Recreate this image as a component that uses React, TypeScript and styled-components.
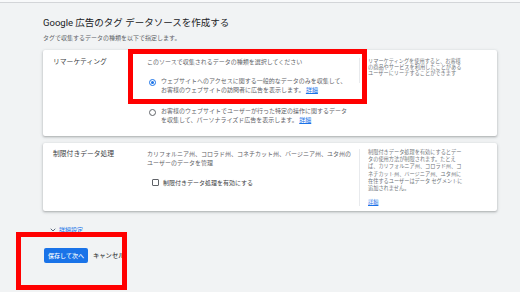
import React from 'react'
import styled, { createGlobalStyle } from 'styled-components'
import { ChevronDown } from 'lucide-react'

const GlobalStyle = createGlobalStyle`
  html, body {
    margin: 0;
    padding: 0;
    background: #f1f3f4;
    font-family: Roboto, "Noto Sans CJK JP", sans-serif;
  }
`

const App: React.FC = () => {
  return (
    <Page>
      <GlobalStyle />
      <TopRule />
      <Main>
        <Title>Google 広告のタグ データソースを作成する</Title>
        <Subtitle>タグで収集するデータの種類を以下で指定します。</Subtitle>

        <Card $first>
          <Label>リマーケティング</Label>
          <Middle>
            <Hint>このソースで収集されるデータの種類を選択してください</Hint>
            <RadioGroup>
              <RadioItem>
                <Radio $checked />
                <OptionText>
                  ウェブサイトへのアクセスに関する一般的なデータのみを収集して、
                  <br />
                  お客様のウェブサイトの訪問者に広告を表示します。 <Link>詳細</Link>
                </OptionText>
              </RadioItem>
              <RadioItem>
                <Radio />
                <OptionText>
                  お客様のウェブサイトでユーザーが行った特定の操作に関するデータ
                  <br />
                  を収集して、パーソナライズド広告を表示します。 <Link>詳細</Link>
                </OptionText>
              </RadioItem>
            </RadioGroup>
          </Middle>
          <Aside $lineHeight={6.3} $top={1} $bottom={7}>
            リマーケティングを使用すると、お客様
            <br />
            の商品やサービスを利用したことがある
            <br />
            ユーザーにリーチすることができます
          </Aside>
        </Card>

        <Card>
          <Label>制限付きデータ処理</Label>
          <Middle>
            <Hint>
              カリフォルニア州、コロラド州、コネチカット州、バージニア州、ユタ州の
              <br />
              ユーザーのデータを管理
            </Hint>
            <CheckRow>
              <CheckBox />
              <CheckLabel>制限付きデータ処理を有効にする</CheckLabel>
            </CheckRow>
          </Middle>
          <Aside $lineHeight={7.3} $top={0} $bottom={0}>
            制限付きデータ処理を有効にするとデー
            <br />
            タの使用方法が制限されます。たとえ
            <br />
            ば、カリフォルニア州、コロラド州、コ
            <br />
            ネチカット州、バージニア州、ユタ州に
            <br />
            在住するユーザーはデータ セグメントに
            <br />
            追加されません。
            <AsideLink>詳細</AsideLink>
          </Aside>
        </Card>

        <Advanced>
          <ChevronDown size={8} strokeWidth={2.5} />
          <span>詳細設定</span>
        </Advanced>

        <Actions>
          <PrimaryButton>保存して次へ</PrimaryButton>
          <TextButton>キャンセル</TextButton>
        </Actions>
      </Main>

      <Highlight $left={128} $top={49} $width={239} $height={55} />
      <Highlight $left={16} $top={232} $width={111} $height={58} />
    </Page>
  )
}

const Page = styled.div`
  position: relative;
  width: 520px;
  height: 292px;
  overflow: hidden;
`

const TopRule = styled.div`
  height: 2px;
  background: #f8f9fa;
  border-bottom: 1px solid #d3d5d8;
`

const Main = styled.div`
  display: flex;
  flex-direction: column;
  align-items: flex-start;
  padding-left: 43px;
`

const Title = styled.div`
  margin-top: 13.5px;
  font-size: 9.5px;
  line-height: 12px;
  color: #202124;
`

const Subtitle = styled.div`
  margin-top: 5px;
  font-size: 6px;
  line-height: 8px;
  color: #5f6368;
`

const Card = styled.div<{ $first?: boolean }>`
  box-sizing: border-box;
  width: 454px;
  margin-top: ${p => (p.$first ? 8.5 : 7)}px;
  padding: ${p => (p.$first ? 6.5 : 6)}px 0 ${p => (p.$first ? 11.25 : 5)}px 10px;
  background: #fff;
  border-radius: 2px;
  box-shadow: 0 1px 2px rgba(60, 64, 67, 0.3), 0 1px 3px 1px rgba(60, 64, 67, 0.1);
  display: grid;
  grid-template-columns: 94px 205px 1fr;
  align-items: start;
`

const Label = styled.div`
  font-size: 6.8px;
  line-height: 10px;
  color: #3c4043;
`

const Middle = styled.div`
  display: flex;
  flex-direction: column;
`

const Hint = styled.div`
  font-size: 6px;
  line-height: 9px;
  color: #5f6368;
  white-space: nowrap;
`

const RadioGroup = styled.div`
  display: flex;
  flex-direction: column;
  gap: 11px;
  margin-top: 10px;
`

const RadioItem = styled.div`
  display: flex;
  align-items: flex-start;
`

const Radio = styled.span<{ $checked?: boolean }>`
  box-sizing: border-box;
  flex: none;
  width: 7px;
  height: 7px;
  margin: 3px 5.5px 0 1.5px;
  border-radius: 50%;
  border: 1px solid ${p => (p.$checked ? '#1a73e8' : '#5f6368')};
  display: flex;
  align-items: center;
  justify-content: center;

  &::after {
    content: '';
    width: 3px;
    height: 3px;
    border-radius: 50%;
    background: ${p => (p.$checked ? '#1a73e8' : 'transparent')};
  }
`

const OptionText = styled.div`
  font-size: 6px;
  line-height: 9.5px;
  color: #5f6368;
  white-space: nowrap;
`

const Link = styled.span`
  color: #1a73e8;
  text-decoration: underline;
`

const Aside = styled.div<{ $lineHeight: number; $top: number; $bottom: number }>`
  margin: ${p => p.$top}px 0 0 7px;
  padding: 0 0 ${p => p.$bottom}px 8px;
  border-left: 1px solid #e8eaed;
  font-size: 5.2px;
  line-height: ${p => p.$lineHeight}px;
  color: #70757a;
  white-space: nowrap;
`

const AsideLink = styled.div`
  margin-top: 6.4px;
  color: #1a73e8;
  text-decoration: underline;
`

const CheckRow = styled.div`
  display: flex;
  align-items: center;
  margin: 11.5px 0 0 5px;
`

const CheckBox = styled.span`
  box-sizing: border-box;
  width: 7px;
  height: 7px;
  border: 1px solid #5f6368;
  border-radius: 1px;
`

const CheckLabel = styled.span`
  margin-left: 4px;
  font-size: 6px;
  line-height: 9px;
  color: #3c4043;
`

const Advanced = styled.div`
  display: flex;
  align-items: center;
  gap: 2px;
  margin: 15px 0 0 6px;
  font-size: 6px;
  line-height: 8px;
  color: #1a73e8;

  svg {
    color: #3c4a63;
  }
`

const Actions = styled.div`
  display: flex;
  align-items: center;
  gap: 5px;
  margin: 14px 0 0 1px;
`

const PrimaryButton = styled.button`
  height: 15px;
  width: 44px;
  padding: 0;
  border: none;
  border-radius: 2px;
  background: #1a73e8;
  color: #fff;
  font-family: inherit;
  font-size: 6px;
  font-weight: 500;
`

const TextButton = styled.span`
  font-size: 6.3px;
  font-weight: 500;
  color: #3c4043;
`

const Highlight = styled.div<{ $left: number; $top: number; $width: number; $height: number }>`
  position: absolute;
  box-sizing: border-box;
  left: ${p => p.$left}px;
  top: ${p => p.$top}px;
  width: ${p => p.$width}px;
  height: ${p => p.$height}px;
  border: 5px solid #ff0000;
  pointer-events: none;
`

export default App
